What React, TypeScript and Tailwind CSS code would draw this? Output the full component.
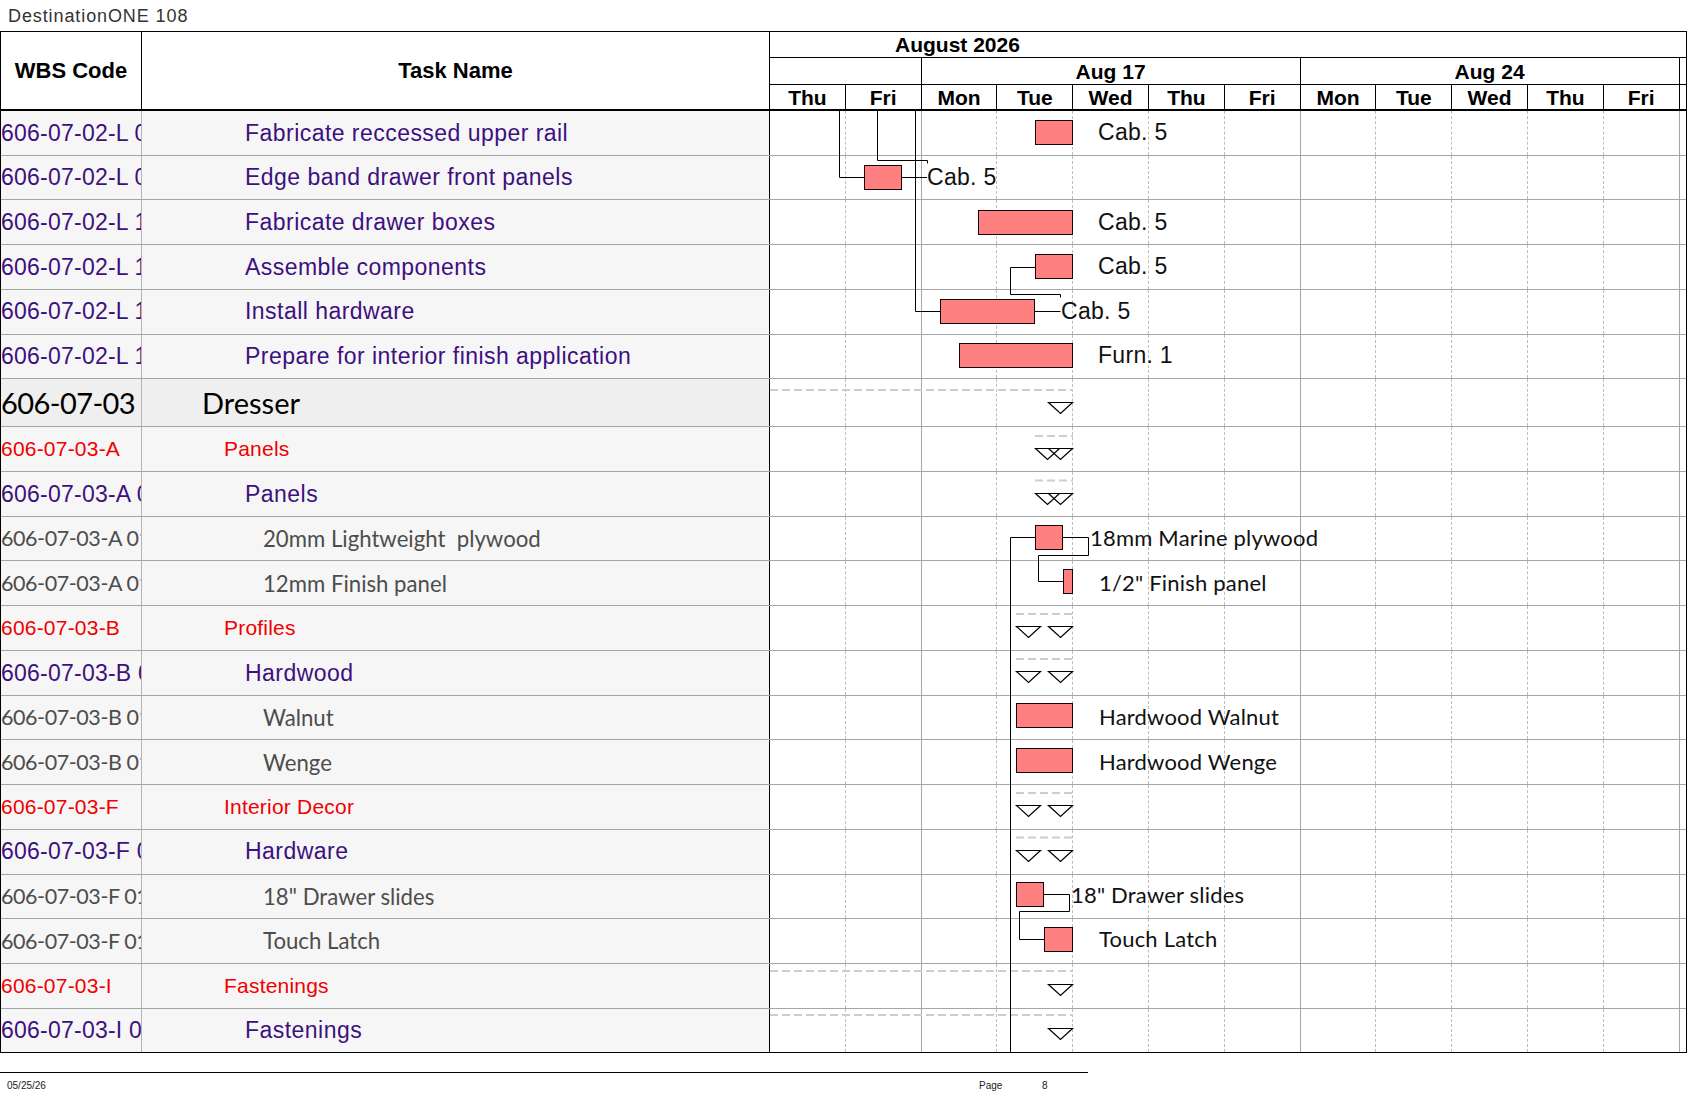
import React from "react";

type Kind = "task" | "group" | "item" | "top";

interface Row {
  code: string;
  name: string;
  kind: Kind;
}

const rows: Row[] = [
  { code: "606-07-02-L 08", name: "Fabricate reccessed upper rail", kind: "task" },
  { code: "606-07-02-L 09", name: "Edge band drawer front panels", kind: "task" },
  { code: "606-07-02-L 10", name: "Fabricate drawer boxes", kind: "task" },
  { code: "606-07-02-L 11", name: "Assemble components", kind: "task" },
  { code: "606-07-02-L 12", name: "Install hardware", kind: "task" },
  { code: "606-07-02-L 13", name: "Prepare for interior finish application", kind: "task" },
  { code: "606-07-03", name: "Dresser", kind: "top" },
  { code: "606-07-03-A", name: "Panels", kind: "group" },
  { code: "606-07-03-A 01", name: "Panels", kind: "task" },
  { code: "606-07-03-A 01 01", name: "20mm Lightweight  plywood", kind: "item" },
  { code: "606-07-03-A 01 02", name: "12mm Finish panel", kind: "item" },
  { code: "606-07-03-B", name: "Profiles", kind: "group" },
  { code: "606-07-03-B 01", name: "Hardwood", kind: "task" },
  { code: "606-07-03-B 01 01", name: "Walnut", kind: "item" },
  { code: "606-07-03-B 01 02", name: "Wenge", kind: "item" },
  { code: "606-07-03-F", name: "Interior Decor", kind: "group" },
  { code: "606-07-03-F 01", name: "Hardware", kind: "task" },
  { code: "606-07-03-F 01 01", name: '18" Drawer slides', kind: "item" },
  { code: "606-07-03-F 01 02", name: "Touch Latch", kind: "item" },
  { code: "606-07-03-I", name: "Fastenings", kind: "group" },
  { code: "606-07-03-I 01", name: "Fastenings", kind: "task" },
];

const styles: Record<Kind, { code: string; name: string; bg: string; h: string }> = {
  task: {
    code: "font-['Liberation_Sans',Arial,sans-serif] text-[23px] tracking-[0.01em] text-[#3d1080]",
    name: "pl-[103px] font-['Liberation_Sans',Arial,sans-serif] text-[23px] tracking-[0.02em] text-[#3d1080]",
    bg: "bg-[#f6f6f6]",
    h: "h-[44.72px]",
  },
  group: {
    code: "font-['Liberation_Sans',Arial,sans-serif] text-[21px] tracking-[0.01em] text-[#f00000]",
    name: "pl-[82px] font-['Liberation_Sans',Arial,sans-serif] text-[21px] tracking-[0.01em] text-[#f00000]",
    bg: "bg-[#f6f6f6]",
    h: "h-[44.72px]",
  },
  item: {
    code: "font-['Lato',sans-serif] text-[21.5px] tracking-[-0.02em] text-[#4d4d4d]",
    name: "pl-[121px] font-['Lato',sans-serif] text-[22.2px] text-[#4d4d4d]",
    bg: "bg-[#f6f6f6]",
    h: "h-[44.72px]",
  },
  top: {
    code: "font-['Lato',sans-serif] text-[29px] tracking-[-0.02em] text-black",
    name: "pl-[60px] font-['Lato',sans-serif] text-[29px] text-black",
    bg: "bg-[#efefef]",
    h: "h-[48px]",
  },
};

const days = ["Thu", "Fri", "Mon", "Tue", "Wed", "Thu", "Fri", "Mon", "Tue", "Wed", "Thu", "Fri"];
const weekEnds = [1, 6, 11];

// page coordinates, the svg viewBox starts at the chart body corner
const bars: [number, number, number][] = [
  [1035.5, 120.5, 37],
  [864.5, 165.5, 37],
  [978.5, 210.5, 94],
  [1035.5, 254.5, 37],
  [940.5, 299.5, 94],
  [959.5, 343.5, 113],
  [1035.5, 525.5, 27],
  [1063.5, 569.5, 9],
  [1016.5, 703.5, 56],
  [1016.5, 748.5, 56],
  [1016.5, 882.5, 27],
  [1044.5, 927.5, 28],
];

const links = [
  "839.5,111 839.5,177.5 864.5,177.5",
  "877.5,111 877.5,160.5 927.5,160.5 927.5,163.5",
  "901.5,177.5 927,177.5",
  "915.5,111 915.5,311.5 940.5,311.5",
  "1034.5,311.5 1060.5,311.5",
  "1035.5,267.5 1010.5,267.5 1010.5,294.5 1060.5,294.5 1060.5,297.5",
  "1035.5,537.5 1010.5,537.5 1010.5,1052",
  "1062.5,537.5 1088.5,537.5 1088.5,555.5 1038.5,555.5 1038.5,581.5 1063.5,581.5",
  "1043.5,894.5 1069.5,894.5 1069.5,911.5 1019.5,911.5 1019.5,939.5 1044.5,939.5",
];

const milestones: [number, number][] = [
  [1048.5, 402.5],
  [1035.5, 448.5], [1048.5, 448.5],
  [1035.5, 493.5], [1048.5, 493.5],
  [1016.5, 626.5], [1048.5, 626.5],
  [1016.5, 671.5], [1048.5, 671.5],
  [1016.5, 805.5], [1048.5, 805.5],
  [1016.5, 850.5], [1048.5, 850.5],
  [1048.5, 984.5],
  [1048.5, 1028.5],
];

const summaries: [number, number][] = [
  [770, 390],
  [1035, 436],
  [1035, 480.5],
  [1016, 614],
  [1016, 659],
  [1016, 793],
  [1016, 837.5],
  [770, 971],
  [770, 1015],
];

const labels: { x: number; y: number; text: string; lato?: boolean }[] = [
  { x: 1098, y: 139.5, text: "Cab. 5" },
  { x: 927, y: 185, text: "Cab. 5" },
  { x: 1098, y: 230, text: "Cab. 5" },
  { x: 1098, y: 274, text: "Cab. 5" },
  { x: 1061, y: 318.5, text: "Cab. 5" },
  { x: 1098, y: 363.3, text: "Furn. 1" },
  { x: 1090, y: 545.7, text: "18mm Marine plywood", lato: true },
  { x: 1099, y: 591, text: '1/2" Finish panel', lato: true },
  { x: 1099, y: 725, text: "Hardwood Walnut", lato: true },
  { x: 1099, y: 769.5, text: "Hardwood Wenge", lato: true },
  { x: 1071, y: 902.7, text: '18" Drawer slides', lato: true },
  { x: 1099, y: 947.3, text: "Touch Latch", lato: true },
];

const GanttOverlay = () => (
  <svg
    className="absolute left-0 top-0 pointer-events-none"
    width={916}
    height={941}
    viewBox="770 111 916 941"
  >
    {summaries.map(([x, y], i) => (
      <line key={i} x1={x} y1={y} x2={1073} y2={y} stroke="#cdcdcd" strokeWidth={2} strokeDasharray="8 4" />
    ))}
    {links.map((p, i) => (
      <polyline key={i} points={p} fill="none" stroke="#000" strokeWidth={1} />
    ))}
    {bars.map(([x, y, w], i) => (
      <rect key={i} x={x} y={y} width={w} height={24} fill="#ff8080" stroke="#1a0000" strokeWidth={1} />
    ))}
    {milestones.map(([x, t], i) => (
      <polygon key={i} points={`${x},${t} ${x + 24},${t} ${x + 12},${t + 11}`} fill="none" stroke="#000" strokeWidth={1.2} />
    ))}
    {labels.map((l, i) => (
      <text
        key={i}
        x={l.x}
        y={l.y}
        fill="#111"
        fontSize={l.lato ? 22 : 23}
        fontFamily={l.lato ? "Lato, sans-serif" : "'Liberation Sans', Arial, sans-serif"}
        letterSpacing={l.lato ? 0.2 : 0.3}
      >
        {l.text}
      </text>
    ))}
  </svg>
);

const App = () => {
  return (
    <div className="w-[1687px] bg-white">
      <div className="h-[31px] pl-[8px] pt-[6px] leading-[20px] font-['Liberation_Sans',Arial,sans-serif] text-[18px] tracking-[0.05em] text-[#333]">
        DestinationONE 108
      </div>

      <div className="border-l border-r border-t border-black">
        {/* header */}
        <div className="flex h-[79px] border-b-2 border-black font-['Liberation_Sans',Arial,sans-serif] font-bold text-[21px] text-black">
          <div className="w-[141px] shrink-0 border-r border-black flex items-center justify-center text-[22px]">
            WBS Code
          </div>
          <div className="w-[628px] shrink-0 border-r border-black flex items-center justify-center text-[22px]">
            Task Name
          </div>
          <div className="flex-1 flex flex-col">
            <div className="h-[26px] border-b border-black flex items-center pl-[125px] leading-none">
              August 2026
            </div>
            <div className="h-[27px] border-b border-black flex">
              <div className="w-[151.6px] shrink-0 border-r border-black" />
              <div className="w-[379px] shrink-0 border-r border-black flex items-center justify-center leading-none">
                Aug 17
              </div>
              <div className="w-[379px] shrink-0 border-r border-black flex items-center justify-center leading-none">
                Aug 24
              </div>
              <div className="flex-1" />
            </div>
            <div className="h-[24px] flex">
              {days.map((d, i) => (
                <div
                  key={i}
                  className="w-[75.8px] shrink-0 border-r border-black flex items-center justify-center leading-none"
                >
                  {d}
                </div>
              ))}
              <div className="flex-1" />
            </div>
          </div>
        </div>

        {/* body */}
        <div className="flex">
          <div className="w-[769px] shrink-0 flex flex-col">
            {rows.map((r, i) => {
              const s = styles[r.kind];
              const last = i === rows.length - 1;
              return (
                <div
                  key={i}
                  className={`flex shrink-0 ${s.h} ${s.bg} border-b ${last ? "border-black" : "border-[#a6a6a6]"}`}
                >
                  <div
                    className={`w-[141px] shrink-0 border-r border-[#b4b4b4] overflow-hidden whitespace-nowrap flex items-center ${s.code}`}
                  >
                    {r.code}
                  </div>
                  <div
                    className={`w-[628px] shrink-0 border-r border-black whitespace-pre flex items-center ${s.name}`}
                  >
                    {r.name}
                  </div>
                </div>
              );
            })}
          </div>

          <div className="flex-1 relative flex flex-col">
            {rows.map((r, i) => {
              const s = styles[r.kind];
              const last = i === rows.length - 1;
              return (
                <div
                  key={i}
                  className={`flex shrink-0 ${s.h} border-b ${last ? "border-black" : "border-[#a6a6a6]"}`}
                >
                  {days.map((_, j) => (
                    <div
                      key={j}
                      className={
                        weekEnds.includes(j)
                          ? "w-[75.8px] shrink-0 border-r border-[#a6a6a6]"
                          : "w-[75.8px] shrink-0 border-r border-dashed border-[#bdbdbd]"
                      }
                    />
                  ))}
                  <div className="flex-1" />
                </div>
              );
            })}
            <GanttOverlay />
          </div>
        </div>
      </div>

      {/* footer */}
      <div className="w-[1088px] mt-[19px] border-t border-black" />
      <div className="flex pl-[7px] pt-[7px] font-['Liberation_Sans_Narrow','Liberation_Sans',Arial,sans-serif] text-[10px] leading-[12px] text-[#222]">
        <span className="w-[972px] shrink-0">05/25/26</span>
        <span className="w-[63px] shrink-0">Page</span>
        <span>8</span>
      </div>
    </div>
  );
};

export default App;
